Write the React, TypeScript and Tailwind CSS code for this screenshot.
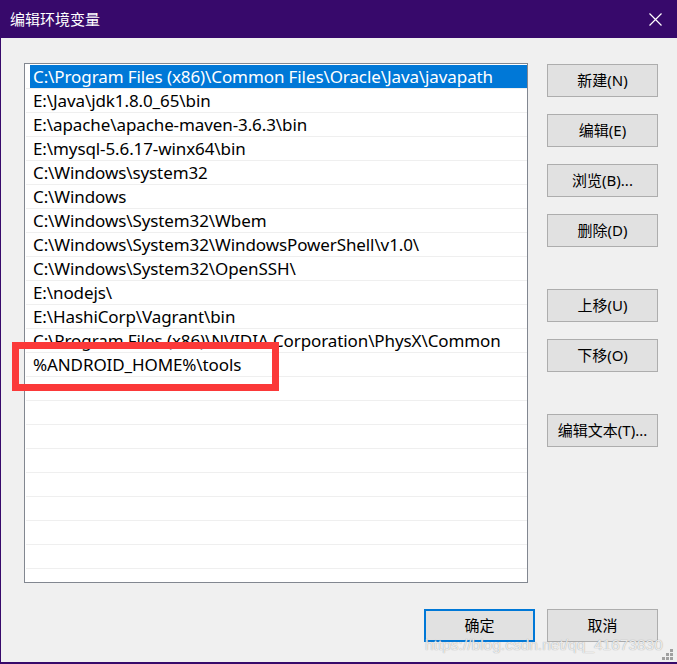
import React from "react";

const paths = [
  "C:\\Program Files (x86)\\Common Files\\Oracle\\Java\\javapath",
  "E:\\Java\\jdk1.8.0_65\\bin",
  "E:\\apache\\apache-maven-3.6.3\\bin",
  "E:\\mysql-5.6.17-winx64\\bin",
  "C:\\Windows\\system32",
  "C:\\Windows",
  "C:\\Windows\\System32\\Wbem",
  "C:\\Windows\\System32\\WindowsPowerShell\\v1.0\\",
  "C:\\Windows\\System32\\OpenSSH\\",
  "E:\\nodejs\\",
  "E:\\HashiCorp\\Vagrant\\bin",
  "C:\\Program Files (x86)\\NVIDIA Corporation\\PhysX\\Common",
  "%ANDROID_HOME%\\tools",
];

// pad the list with blank rows so the lines run to the bottom
const rows = [...paths, ...Array(9).fill("")];

const Btn = ({ label, primary }: { label: string; primary?: boolean }) => (
  <button
    className={`w-[111px] h-[33px] bg-[#e1e1e1] text-[15px] text-black flex items-center justify-center ${
      primary ? "border-2 border-[#0078d7]" : "border border-[#adadad]"
    }`}
  >
    {label}
  </button>
);

export default function App() {
  return (
    <div
      className="relative w-[677px] h-[664px] bg-[#f0f0f0] border-l border-b-2 border-[#37096b] overflow-hidden"
      style={{ fontFamily: '"Noto Sans", "Noto Sans CJK SC", sans-serif' }}
    >
      {/* title bar */}
      <div className="h-[38px] bg-[#37096b] flex items-center justify-between pl-[9px] pr-[15px]">
        <span className="text-white text-[15px]">编辑环境变量</span>
        <svg width="13" height="13" viewBox="0 0 13 13">
          <path d="M0.5 0.5 L12.5 12.5 M12.5 0.5 L0.5 12.5" stroke="#fff" strokeWidth="1.2" />
        </svg>
      </div>

      <div className="flex pt-[25px] pl-[23px]">
        {/* path list */}
        <div className="w-[504px] h-[520px] border border-[#828790] bg-white overflow-hidden pt-px">
          {rows.map((p, i) => (
            <div key={i} className="h-[24px] ml-px border-b border-[#efefef]">
              <div
                className={`h-[23px] ml-[4px] pl-[3px] flex items-center text-[17px] tracking-[-0.1px] whitespace-nowrap ${
                  i === 0 ? "bg-[#0078d7] text-white" : "text-black"
                }`}
              >
                {p}
              </div>
            </div>
          ))}
        </div>

        {/* side buttons */}
        <div className="ml-[19px] mt-px flex flex-col">
          <div className="flex flex-col gap-[17px]">
            <Btn label="新建(N)" />
            <Btn label="编辑(E)" />
            <Btn label="浏览(B)..." />
            <Btn label="删除(D)" />
          </div>
          <div className="flex flex-col gap-[17px] mt-[42px]">
            <Btn label="上移(U)" />
            <Btn label="下移(O)" />
          </div>
          <div className="mt-[42px]">
            <Btn label="编辑文本(T)..." />
          </div>
        </div>
      </div>

      <div className="flex justify-end gap-[12px] pr-[19px] mt-[26px]">
        <Btn label="确定" primary />
        <Btn label="取消" />
      </div>

      {/* highlight box */}
      <div className="absolute left-[11px] top-[342px] w-[267px] h-[49px] border-[7px] border-[#fb3939]" />

      {/* watermark */}
      <div
        className="absolute left-[424px] top-[635px] text-[15.5px] leading-[20px] text-white/80"
        style={{ fontFamily: '"Liberation Sans", Arial, sans-serif', textShadow: "0 0 1px #888" }}
      >
        https://blog.csdn.net/qq_41673830
      </div>

      {/* resize grip */}
      <svg className="absolute right-[3px] bottom-[1px]" width="12" height="12" viewBox="0 0 12 12">
        <g fill="#a0a0a0">
          <rect x="8" y="0" width="3" height="3" />
          <rect x="4" y="4" width="3" height="3" />
          <rect x="8" y="4" width="3" height="3" />
          <rect x="0" y="8" width="3" height="3" />
          <rect x="4" y="8" width="3" height="3" />
          <rect x="8" y="8" width="3" height="3" />
        </g>
      </svg>
    </div>
  );
}
